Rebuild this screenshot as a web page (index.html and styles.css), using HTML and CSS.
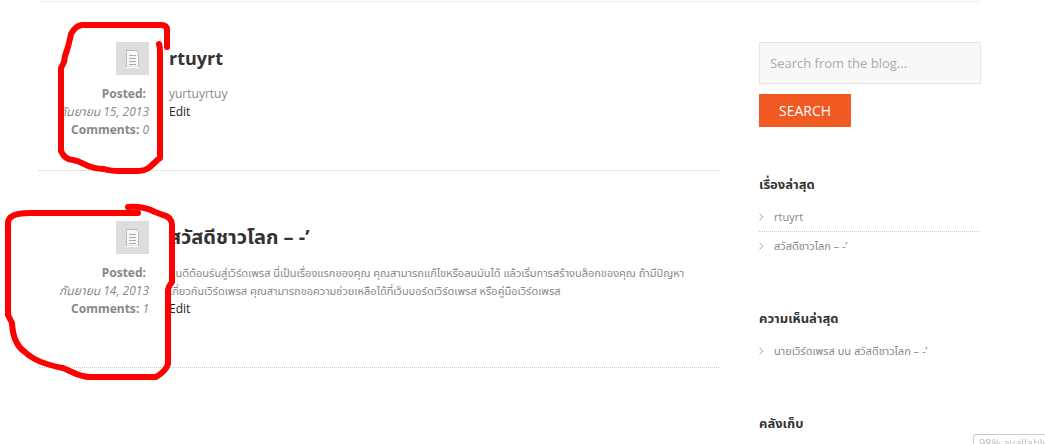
FILE: index.html
```html
<!DOCTYPE html>
<html lang="th">
<head>
<meta charset="utf-8">
<meta name="viewport" content="width=device-width, initial-scale=1">
<title>Blog</title>
<link rel="stylesheet" href="styles.css">
</head>
<body>
<div class="page">
  <div class="columns">
    <main class="posts">
      <article class="post">
        <div class="meta">
          <span class="format"><svg width="14" height="18" viewBox="0 0 14 18" aria-hidden="true"><path d="M0 2h1v15h11V3h1v15H0z" fill="#fff"/><path d="M1 1h10v2h1v13H1z" fill="#f8f8f8"/><path d="M.5 17V1.500M0 .5h11M11 1.500h1M12.500 3v14" fill="none" stroke="#bbb"/><path d="M3 5.500h7M3 8.500h7M3 11.500h7M3 14.500h7" stroke="#aaa"/></svg></span>
          <p><b class="lead">Posted:</b> <i>กันยายน 15, 2013</i></p>
          <p><b>Comments:</b> <i>0</i></p>
        </div>
        <div class="entry">
          <h2>rtuyrt</h2>
          <p>yurtuyrtuy</p>
          <a class="edit" href="#edit-2">Edit</a>
        </div>
      </article>
      <article class="post thai">
        <div class="meta">
          <span class="format"><svg width="14" height="18" viewBox="0 0 14 18" aria-hidden="true"><path d="M0 2h1v15h11V3h1v15H0z" fill="#fff"/><path d="M1 1h10v2h1v13H1z" fill="#f8f8f8"/><path d="M.5 17V1.500M0 .5h11M11 1.500h1M12.500 3v14" fill="none" stroke="#bbb"/><path d="M3 5.500h7M3 8.500h7M3 11.500h7M3 14.500h7" stroke="#aaa"/></svg></span>
          <p><b class="lead">Posted:</b> <i>กันยายน 14, 2013</i></p>
          <p><b>Comments:</b> <i>1</i></p>
        </div>
        <div class="entry">
          <h2>สวัสดีชาวโลก – -’</h2>
          <p>ยินดีต้อนรับสู่เวิร์ดเพรส นี่เป็นเรื่องแรกของคุณ คุณสามารถแก้ไขหรือลบมันได้ แล้วเริ่มการสร้างบล็อกของคุณ ถ้ามีปัญหาเกี่ยวกับเวิร์ดเพรส คุณสามารถขอความช่วยเหลือได้ที่เว็บบอร์ดเวิร์ดเพรส หรือคู่มือเวิร์ดเพรส</p>
          <a class="edit" href="#edit-1">Edit</a>
        </div>
      </article>
    </main>
    <aside class="sidebar">
      <form class="search">
        <input type="text" aria-label="Search from the blog" placeholder="Search from the blog...">
        <button type="submit">SEARCH</button>
      </form>
      <section class="widget">
        <h3>เรื่องล่าสุด</h3>
        <ul>
          <li><svg width="5" height="8" viewBox="0 0 5 8" aria-hidden="true"><path d="M.5.5 4 4 .5 7.500"/></svg><a href="#post-2">rtuyrt</a></li>
          <li><svg width="5" height="8" viewBox="0 0 5 8" aria-hidden="true"><path d="M.5.5 4 4 .5 7.500"/></svg><a href="#post-1">สวัสดีชาวโลก – -’</a></li>
        </ul>
      </section>
      <section class="widget">
        <h3>ความเห็นล่าสุด</h3>
        <ul>
          <li><svg width="5" height="8" viewBox="0 0 5 8" aria-hidden="true"><path d="M.5.5 4 4 .5 7.500"/></svg><span><a href="#author">นายเวิร์ดเพรส</a> บน <a href="#comment-1">สวัสดีชาวโลก – -’</a></span></li>
        </ul>
      </section>
      <section class="widget">
        <h3>คลังเก็บ</h3>
      </section>
    </aside>
  </div>
  <svg class="marks" width="190" height="390" viewBox="0 0 190 390" aria-hidden="true">
    <path d="M167 47V30Q167 25 161 25H82Q75 26 71 34Q69 44 67 50L65 56L64 62L61 68V151Q65 160 73 160C83 161 86 169 104 169Q110 171 119 171H139C149 171 153 163 160 158V54Q160 47 159 44"/>
    <path d="M138 213H30Q8 213 8 223V315L12 323Q13 344 25 352Q36 363 63 368C73 372 79 377 90 377H156Q166 371 168 364V291Q168 287 172 282V225Q172 217 163 215L155 212Q144 206 128 207"/>
  </svg>
</div>
<div class="status">98% available</div>
</body>
</html>
```
FILE: styles.css
```css
* { box-sizing: border-box; }
body {
  margin: 0;
  background: #fff;
  color: #888;
  font: 12px/18px "Open Sans", "Noto Sans", "Noto Sans Thai", "Liberation Sans", sans-serif;
  overflow: hidden;
}
h2, h3, p, ul { margin: 0; padding: 0; }
a { color: inherit; text-decoration: none; }
.page { position: relative; height: 100vh; overflow: hidden; padding: 1px 66px 0 39px; }
.columns {
  display: grid;
  grid-template-columns: minmax(0, 1fr) 220px;
  gap: 40px;
  border-top: 1px solid #eee;
  padding-top: 40px;
}
.posts { display: flex; flex-direction: column; gap: 50px; }
.post {
  display: grid;
  grid-template-columns: 110px minmax(0, 1fr);
  gap: 20px;
  border-bottom: 1px dotted #ccc;
}
.meta { text-align: right; }
.meta b { font: bold 12px/18px "Noto Sans", "Open Sans", sans-serif; }
.meta .lead { display: block; padding-right: 3px; }
.format {
  display: flex;
  align-items: center;
  justify-content: center;
  width: 33px;
  height: 33px;
  margin: 0 0 10px auto;
  background: #ddd;
}
.entry { padding-bottom: 49px; }
.entry h2 { color: #333; font-size: 18px; line-height: 32px; margin-bottom: 11px; }
.thai h2 { font-size: 20px; }
.thai .entry p { font-size: 11px; padding-right: 30px; }
.edit { display: block; color: #222; }
.search input {
  display: block;
  width: 222px;
  height: 42px;
  padding: 0 10px;
  border: 1px solid #e5e5e5;
  background: #f8f8f8;
  font: 13px/18px "Open Sans", "Noto Sans", sans-serif;
}
.search input::placeholder { color: #aaa; opacity: 1; }
.search button {
  display: block;
  margin-top: 10px;
  padding: 0 20px;
  height: 33px;
  border: 0;
  background: #f15a23;
  color: #fff;
  font: 14px/18px "Open Sans", "Noto Sans", sans-serif;
}
.search { margin-bottom: 48px; }
.widget { margin-bottom: 49px; }
.widget h3 { color: #333; font-size: 13px; line-height: 18px; margin-bottom: 10px; }
.widget li {
  display: flex;
  align-items: center;
  gap: 10px;
  padding: 5px 0;
  list-style: none;
  font-size: 11px;
}
.widget li + li { border-top: 1px dotted #ccc; }
.widget path { fill: none; stroke: #aaa; }
.marks { position: absolute; left: 0; top: 0; }
.marks path { fill: none; stroke: #f00; stroke-width: 6px; stroke-linecap: round; stroke-linejoin: round; }
.status {
  position: fixed;
  right: 0;
  bottom: 0;
  width: 72px;
  height: 10px;
  padding-left: 5px;
  overflow: hidden;
  white-space: nowrap;
  border: 1px solid #ccc;
  border-width: 1px 0 0 1px;
  border-radius: 3px 0 0 0;
  background: #fff;
  color: #bbb;
  font-size: 11px;
  line-height: 16px;
}
```
